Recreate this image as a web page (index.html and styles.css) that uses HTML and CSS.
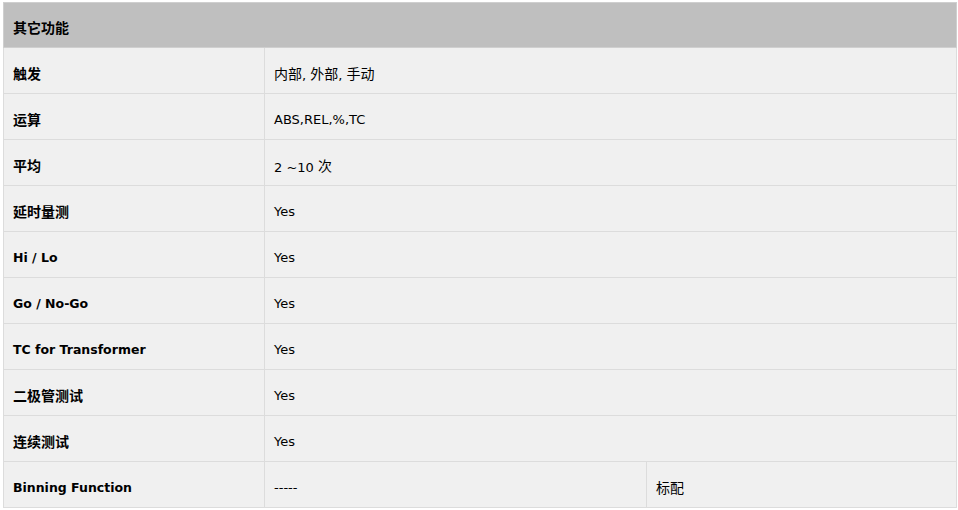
FILE: index.html
```html
<!DOCTYPE html>
<html lang="zh">
<head>
<meta charset="utf-8">
<link rel="stylesheet" href="styles.css">
</head>
<body>
<table class="spec">
  <colgroup>
    <col class="c1"><col class="c2"><col class="c3">
  </colgroup>
  <tr class="head"><th colspan="3"><span class="cjk">其它功能</span></th></tr>
  <tr><td class="label"><span class="cjk">触发</span></td><td colspan="2"><span class="cjk">内部</span>, <span class="cjk">外部</span>, <span class="cjk">手动</span></td></tr>
  <tr><td class="label"><span class="cjk">运算</span></td><td colspan="2">ABS,REL,%,TC</td></tr>
  <tr><td class="label"><span class="cjk">平均</span></td><td colspan="2">2 ~10 <span class="cjk">次</span></td></tr>
  <tr><td class="label"><span class="cjk">延时量测</span></td><td colspan="2">Yes</td></tr>
  <tr><td class="label">Hi / Lo</td><td colspan="2">Yes</td></tr>
  <tr><td class="label">Go / No-Go</td><td colspan="2">Yes</td></tr>
  <tr><td class="label">TC for Transformer</td><td colspan="2">Yes</td></tr>
  <tr><td class="label"><span class="cjk">二极管测试</span></td><td colspan="2">Yes</td></tr>
  <tr><td class="label"><span class="cjk">连续测试</span></td><td colspan="2">Yes</td></tr>
  <tr><td class="label">Binning Function</td><td>-----</td><td><span class="cjk">标配</span></td></tr>
</table>
</body>
</html>
```

FILE: styles.css
```css
html, body {
  margin: 0;
  padding: 0;
  background: #ffffff;
}
body {
  padding: 2px 1px 0 3px;
  font-family: "DejaVu Sans", "Noto Sans CJK SC", sans-serif;
  font-size: 13px;
  color: #000;
}
.spec {
  width: 954px;
  border-collapse: collapse;
  table-layout: fixed;
  background: #f0f0f0;
}
.c1 { width: 261px; }
.c2 { width: 382px; }
.spec th, .spec td {
  height: 46px;
  padding: 7px 0 0 9px;
  border: 1px solid #dcdcdc;
  text-align: left;
  vertical-align: middle;
  white-space: nowrap;
  box-sizing: border-box;
  line-height: 16px;
}
.spec td {
  font-weight: normal;
}
.spec .head th {
  height: 45px;
  background: #bfbfbf;
  font-weight: bold;
  border-color: #cfcfcf;
}
.spec td.label {
  font-weight: bold;
  font-size: 12.5px;
}
.cjk {
  font-family: "Noto Sans CJK SC", sans-serif;
  font-size: 14px;
  vertical-align: 1px;
}
```
